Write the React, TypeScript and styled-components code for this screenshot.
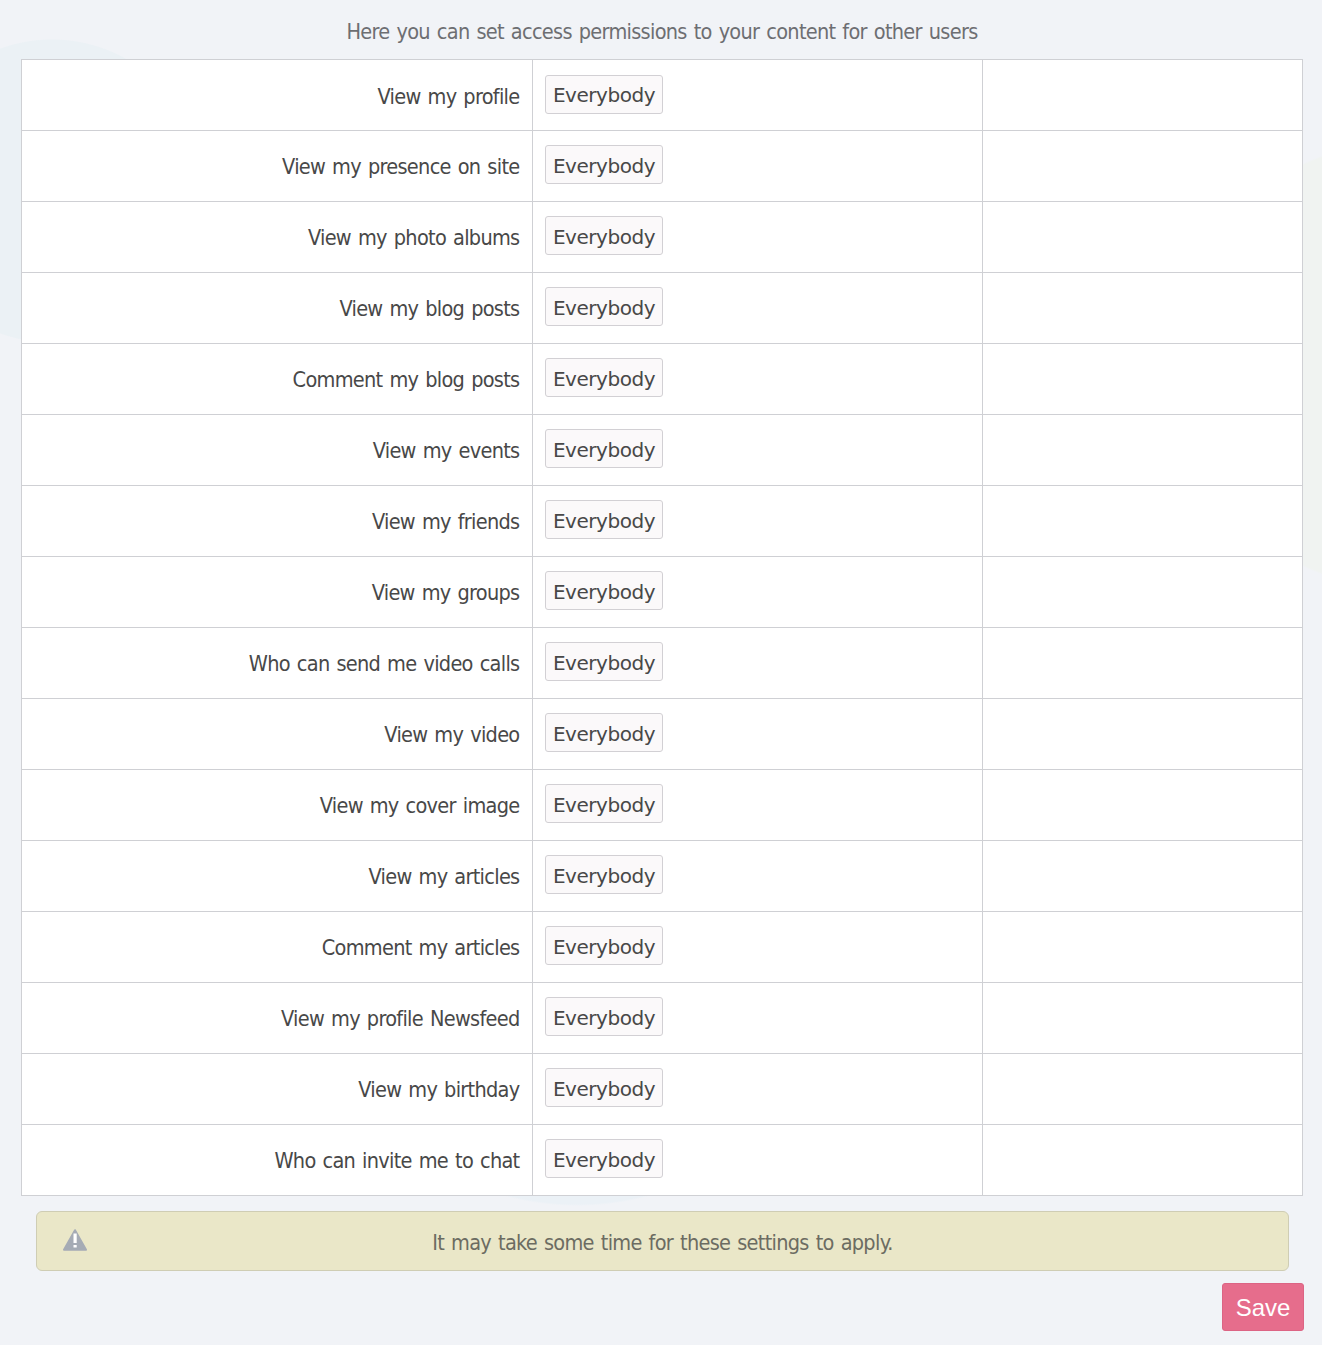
import React from 'react';
import styled, { createGlobalStyle } from 'styled-components';

const GlobalStyle = createGlobalStyle`
  *, *::before, *::after { box-sizing: border-box; }
  body {
    margin: 0;
    color: #484848;
    font: 21.5px/26px "DejaVu Sans", sans-serif;
    font-stretch: condensed;
    letter-spacing: -0.7px;
    word-spacing: 1.5px;
    background:
      radial-gradient(circle at 52px 191px, #ebf1f5 151px, transparent 152px),
      radial-gradient(circle at 1398px 365px, #f0f3f1 221px, transparent 223px),
      radial-gradient(circle at 577px 933px, #ebf1f6 271px, transparent 273px),
      #f1f3f7;
  }
`;

const Page = styled.main`
  display: flex;
  flex-direction: column;
  height: 1345px;
  padding: 19px 19px 0 21px;
`;

const Intro = styled.p`
  margin: 0 0 14px;
  color: #6d6e72;
  text-align: center;
`;

const Permissions = styled.div`
  width: 1282px;
  border: solid #cfd0d4;
  border-width: 1px 0 0 1px;
  background: #fff;
`;

const Row = styled.div`
  display: grid;
  grid-template-columns: 511px 450px 320px;
  height: 71px;
`;

const Cell = styled.div`
  border: solid #cfd0d4;
  border-width: 0 1px 1px 0;
`;

const LabelCell = styled(Cell)<{ $first: boolean }>`
  padding: ${(p) => (p.$first ? '24px' : '23px')} 12.5px 0 0;
  text-align: right;
  white-space: nowrap;
`;

const ValueCell = styled(Cell)`
  padding: 14px 12px 0;
`;

const AccessButton = styled.button<{ $first: boolean }>`
  display: block;
  width: 118px;
  height: 39px;
  margin: ${(p) => (p.$first ? '1px' : '0')} 0 0;
  padding: ${(p) => (p.$first ? '1px 0 0' : '3px 0 0')};
  border: 1px solid #d2d0d4;
  border-radius: 3px;
  background: #fbf9fa;
  color: #484848;
  font: 20px/24px Verdana, "DejaVu Sans", sans-serif;
  letter-spacing: -0.45px;
`;

const Notice = styled.div`
  display: flex;
  align-items: center;
  width: 1253px;
  height: 60px;
  margin: 15px 0 0 15px;
  padding: 0 25px;
  border: 1px solid #cfcdb4;
  border-radius: 6px;
  background: #eae7c8;
  color: #6c6c62;
`;

const WarningIcon = styled.svg`
  flex: none;
  width: 26px;
  height: 24px;
  margin-bottom: 2px;
`;

const NoticeText = styled.span`
  flex: 1;
  padding: 3px 26px 0 0;
  text-align: center;
`;

const SaveButton = styled.button`
  align-self: flex-end;
  width: 82px;
  height: 48px;
  margin: 12px -1px 0 0;
  padding: 1px 0 0;
  border: 1px solid #dc6484;
  border-radius: 3px;
  background: #e66d8c;
  color: #fff;
  font: 24px/28px Arial, "Liberation Sans", sans-serif;
`;

const permissions = [
  'View my profile',
  'View my presence on site',
  'View my photo albums',
  'View my blog posts',
  'Comment my blog posts',
  'View my events',
  'View my friends',
  'View my groups',
  'Who can send me video calls',
  'View my video',
  'View my cover image',
  'View my articles',
  'Comment my articles',
  'View my profile Newsfeed',
  'View my birthday',
  'Who can invite me to chat',
];

export default function App() {
  return (
    <>
      <GlobalStyle />
      <Page>
        <Intro>Here you can set access permissions to your content for other users</Intro>
        <Permissions>
          {permissions.map((label, i) => (
            <Row key={label}>
              <LabelCell $first={i === 0}>{label}</LabelCell>
              <ValueCell>
                <AccessButton $first={i === 0}>Everybody</AccessButton>
              </ValueCell>
              <Cell />
            </Row>
          ))}
        </Permissions>
        <Notice>
          <WarningIcon viewBox="0 0 26 24" aria-hidden="true">
            <path d="M13 2.2 24 21.8H2Z" fill="#a5abb5" stroke="#a5abb5" strokeWidth="2" strokeLinejoin="round" />
            <path d="M11.5 5.5h3.2v9.5h-3.2zM11.5 17h3.2v2.6h-3.2z" fill="#fff" />
          </WarningIcon>
          <NoticeText>It may take some time for these settings to apply.</NoticeText>
        </Notice>
        <SaveButton>Save</SaveButton>
      </Page>
    </>
  );
}
